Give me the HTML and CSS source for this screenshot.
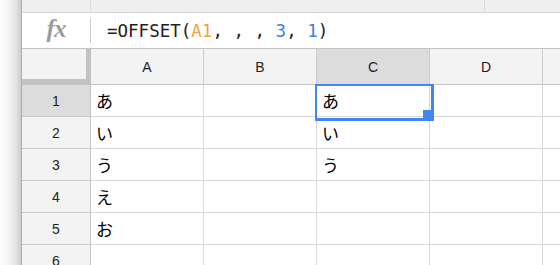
FILE: index.html
```html
<!DOCTYPE html>
<html lang="ja">

<head>
    <meta charset="UTF-8">
    <meta name="viewport" content="width=device-width, initial-scale=1.0">
    <title>OFFSET</title>
    <link rel="stylesheet" href="styles.css">
</head>

<body>
    <div class="window">
        <div class="shade"></div>
        <div class="sheet">
            <div class="toolbar">
                <div class="tool tool-name"></div>
                <div class="tool tool-wide"></div>
            </div>

            <div class="formula-bar">
                <div class="fx">fx</div>
                <div class="formula">=OFFSET(<span class="ref">A1</span>, , , <span class="num">3</span>, <span class="num">1</span>)</div>
            </div>

            <div class="grid">
                <div class="corner"></div>
                <div class="col-head">A</div>
                <div class="col-head">B</div>
                <div class="col-head active">C</div>
                <div class="col-head">D</div>
                <div class="col-head"></div>

                <div class="row-head active">1</div>
                <div class="cell">あ</div>
                <div class="cell"></div>
                <div class="cell selected">あ<span class="handle"></span></div>
                <div class="cell"></div>
                <div class="cell"></div>

                <div class="row-head">2</div>
                <div class="cell">い</div>
                <div class="cell"></div>
                <div class="cell">い</div>
                <div class="cell"></div>
                <div class="cell"></div>

                <div class="row-head">3</div>
                <div class="cell">う</div>
                <div class="cell"></div>
                <div class="cell">う</div>
                <div class="cell"></div>
                <div class="cell"></div>

                <div class="row-head">4</div>
                <div class="cell">え</div>
                <div class="cell"></div>
                <div class="cell"></div>
                <div class="cell"></div>
                <div class="cell"></div>

                <div class="row-head">5</div>
                <div class="cell">お</div>
                <div class="cell"></div>
                <div class="cell"></div>
                <div class="cell"></div>
                <div class="cell"></div>

                <div class="row-head">6</div>
                <div class="cell"></div>
                <div class="cell"></div>
                <div class="cell"></div>
                <div class="cell"></div>
                <div class="cell"></div>
            </div>
        </div>
    </div>
</body>

</html>
```

FILE: styles.css
```css
* {
    box-sizing: border-box;
}

body {
    margin: 0;
    width: 560px;
    height: 265px;
    overflow: hidden;
    background: #fff;
    font-family: "Liberation Sans", Arial, sans-serif;
    color: #222;
}

.window {
    display: flex;
    height: 265px;
}

.shade {
    width: 21px;
    flex-shrink: 0;
    background: linear-gradient(to right, #fff 0%, #f5f5f5 40%, #e2e2e2 78%, #cbcbcb 100%);
}

.sheet {
    flex: 1;
    min-width: 0;
    overflow: hidden;
    border-left: 1px solid #86b9e8;
}

.toolbar {
    display: flex;
    height: 13px;
    background: #efefef;
    border-bottom: 1px solid #d9d9d9;
}

.tool {
    border-right: 1px solid #dcdcdc;
}

.tool-name {
    width: 69px;
}

.tool-wide {
    width: 394px;
}

.formula-bar {
    display: flex;
    align-items: center;
    height: 36px;
    border-bottom: 1px solid #c4c4c4;
}

.fx {
    width: 69px;
    height: 25px;
    display: flex;
    align-items: center;
    justify-content: center;
    border-right: 1px solid #cfcfcf;
    font-family: "Liberation Serif", "Times New Roman", serif;
    font-style: italic;
    font-weight: bold;
    font-size: 25px;
    letter-spacing: -1px;
    color: #9c9c9c;
    padding-bottom: 3px;
}

.formula {
    padding-left: 16px;
    font-family: "DejaVu Sans Mono", "Liberation Mono", monospace;
    font-size: 17.5px;
    color: #222;
    white-space: pre;
}

.ref {
    color: #f2a33a;
}

.num {
    color: #3d7fdc;
}

.grid {
    display: grid;
    grid-template-columns: 69px repeat(5, 113px);
    grid-template-rows: 36px;
    grid-auto-rows: 32px;
    width: 634px;
}

.corner {
    background: #f3f3f3;
    border-right: 5px solid #c2c2c2;
    border-bottom: 6px solid #c2c2c2;
}

.col-head,
.row-head {
    display: flex;
    align-items: center;
    justify-content: center;
    background: #f3f3f3;
    font-size: 14px;
    color: #222;
}

.col-head {
    border-right: 1px solid #cccccc;
    border-bottom: 1px solid #c4c4c4;
}

.row-head {
    border-right: 1px solid #c4c4c4;
    border-bottom: 1px solid #cccccc;
}

.col-head.active,
.row-head.active {
    background: #dcdcdc;
}

.cell {
    position: relative;
    display: flex;
    align-items: center;
    padding-left: 5px;
    border-right: 1px solid #d9d9d9;
    border-bottom: 1px solid #d9d9d9;
    font-family: "Noto Sans CJK JP", sans-serif;
    font-size: 17px;
    color: #000;
}

.selected {
    z-index: 2;
}

.selected::before {
    content: "";
    position: absolute;
    left: -2px;
    top: -1px;
    width: 114px;
    height: 32px;
    border: 2px solid #4285f4;
    border-right-width: 3px;
    border-bottom-width: 3px;
}

.handle {
    position: absolute;
    left: 106px;
    top: 25px;
    width: 9px;
    height: 9px;
    background: #4285f4;
}
```
